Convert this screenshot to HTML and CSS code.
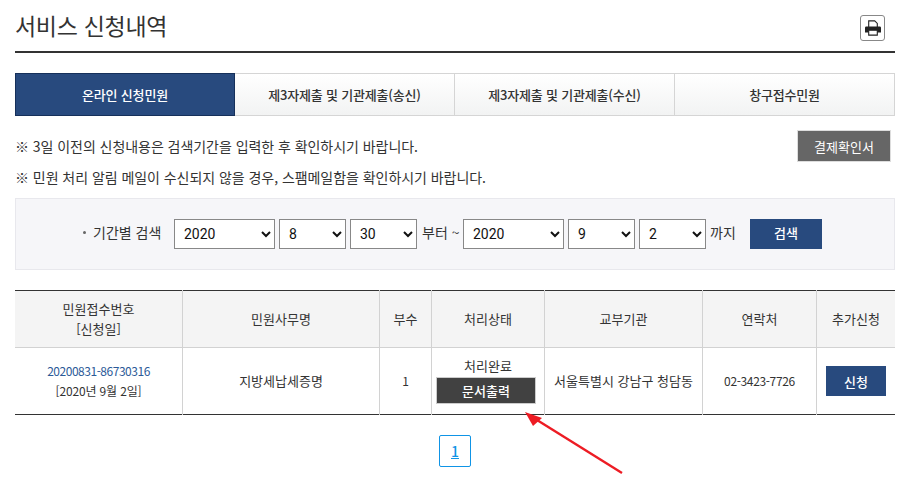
FILE: index.html
```html
<!DOCTYPE html>
<html lang="ko">
<head>
<meta charset="utf-8">
<title>서비스 신청내역</title>
<link rel="stylesheet" href="styles.css">
</head>
<body>
<main class="page">
  <header class="head">
    <h1 class="title">서비스 신청내역</h1>
    <button class="print" type="button" aria-label="인쇄">
      <svg viewBox="0 0 16 16" width="16" height="16">
        <path fill="#fff" stroke="#222" stroke-width="1.100" d="M3.700 7.500V.9h6l2.600 2.500v4.100z"/>
        <path fill="#222" d="M1.300 6.500h13.400a1.300 1.300 0 0 1 1.300 1.300V12.500H0V7.800a1.300 1.300 0 0 1 1.300-1.300z"/>
        <path fill="#fff" stroke="#222" stroke-width="1.100" d="M3.700 10.200h8.600v4.900H3.700z"/>
      </svg>
    </button>
  </header>

  <nav class="tabs">
    <a class="tab active">온라인 신청민원</a>
    <a class="tab">제3자제출 및 기관제출(송신)</a>
    <a class="tab">제3자제출 및 기관제출(수신)</a>
    <a class="tab">창구접수민원</a>
  </nav>

  <section class="notes">
    <div class="note-list">
      <p>※ 3일 이전의 신청내용은 검색기간을 입력한 후 확인하시기 바랍니다.</p>
      <p>※ 민원 처리 알림 메일이 수신되지 않을 경우, 스팸메일함을 확인하시기 바랍니다.</p>
    </div>
    <button class="confirm" type="button">결제확인서</button>
  </section>

  <form class="search">
    <span class="search-label"><i class="dot"></i>기간별 검색</span>
    <select class="sel year"><option>2020</option></select>
    <select class="sel"><option>8</option></select>
    <select class="sel"><option>30</option></select>
    <span class="word from">부터 ~</span>
    <select class="sel year"><option>2020</option></select>
    <select class="sel"><option>9</option></select>
    <select class="sel"><option>2</option></select>
    <span class="word to">까지</span>
    <button class="go" type="button">검색</button>
  </form>

  <table class="list">
    <colgroup>
      <col class="c1"><col class="c2"><col class="c3"><col class="c4"><col class="c5"><col class="c6"><col class="c7">
    </colgroup>
    <thead>
      <tr>
        <th>민원접수번호<br>[신청일]</th>
        <th>민원사무명</th>
        <th>부수</th>
        <th>처리상태</th>
        <th>교부기관</th>
        <th>연락처</th>
        <th>추가신청</th>
      </tr>
    </thead>
    <tbody>
      <tr>
        <td class="small"><a class="num">20200831-86730316</a><br><span class="date">[2020년 9월 2일]</span></td>
        <td>지방세납세증명</td>
        <td class="small">1</td>
        <td class="state">처리완료<button class="doc" type="button">문서출력</button></td>
        <td>서울특별시 강남구 청담동</td>
        <td class="small phone">02-3423-7726</td>
        <td><button class="apply" type="button">신청</button></td>
      </tr>
    </tbody>
  </table>

  <div class="pager"><a class="pg">1</a></div>

  <svg class="arrow" viewBox="0 0 110 75" width="110" height="75" aria-hidden="true">
    <line x1="102" y1="68" x2="17" y2="15" stroke="#ed1c24" stroke-width="2.400"/>
    <polygon points="5,7 22,13 13,21" fill="#ed1c24"/>
  </svg>
</main>
</body>
</html>
```
FILE: styles.css
```css
* { box-sizing: border-box; }
html, body { margin: 0; padding: 0; background: #fff; }
body {
  font-family: "Noto Sans CJK KR", "Noto Sans", sans-serif;
  color: #333;
  font-size: 13px;
  overflow: hidden;
  height: 504px;
}
.page { position: relative; width: 880px; margin-left: 15px; }
.head {
  height: 53px;
  border-bottom: 2px solid #333;
  display: flex;
  justify-content: space-between;
  align-items: flex-start;
}
.title { margin: 8px 0 0; font-size: 23px; line-height: 34px; font-weight: 400; color: #333; letter-spacing: -0.3px; }
.print {
  width: 25px; height: 26px; margin: 15px 10px 0 0; padding: 0;
  background: #fff; border: 1px solid #888; border-radius: 3px;
  display: flex; align-items: center; justify-content: center;
}
.tabs { display: flex; margin-top: 20px; height: 43px; }
.tab {
  width: 220px;
  display: flex; align-items: center; justify-content: center;
  border: 1px solid #d5d5d5; border-left: 0;
  background: linear-gradient(#fff, #f2f3f3);
  font-size: 13px; font-weight: 500; color: #333;
  letter-spacing: -0.18px;
}
.tab:last-child { border-right: 1px solid #d5d5d5; }
.tab.active { background: #284a7e; color: #fff; border: 1px solid #16305a; }
.notes { display: flex; justify-content: space-between; height: 82px; padding: 14px 4px 0 0; }
.note-list { padding-top: 5px; }
.note-list p { margin: 0 0 9px; font-size: 14px; line-height: 22px; color: #333; letter-spacing: -0.05px; }
.confirm {
  width: 94px; height: 32px; padding: 0;
  background: #666; color: #fff; border: 1px solid #ddd;
  font: 400 13px "Noto Sans CJK KR", sans-serif;
}
.search {
  height: 72px;
  background: #f6f6f9;
  border: 1px solid #e8e8ed;
  display: flex; align-items: flex-start;
  padding: 20px 0 0 66px;
}
.search-label { display: flex; align-items: center; height: 26px; font-size: 14px; width: 92px; white-space: nowrap; }
.dot { width: 3px; height: 3px; background: #666; border-radius: 50%; margin: 0 7px 0 1px; }
.sel {
  width: 67px; height: 30px; margin-right: 4px;
  background: #fff; border: 1px solid #888; border-radius: 0;
  font: 400 14px Roboto, "Noto Sans", sans-serif; color: #111;
  padding-left: 5px;
}
.sel.year { width: 101px; }
.word { height: 26px; display: flex; align-items: center; font-size: 14px; white-space: nowrap; }
.from { width: 42px; }
.to { width: 40px; }
.word.from { margin-left: 1px; margin-right: -1px; }
.go {
  width: 72px; height: 30px; padding: 0 0 3px; border: 0;
  background: #284a7e; color: #fff;
  font: 500 13px "Noto Sans CJK KR", sans-serif;
}
.list {
  width: 880px; margin-top: 20px;
  border-collapse: collapse; table-layout: fixed;
  border-top: 1px solid #333; border-bottom: 1px solid #333;
}
.c1 { width: 167.500px; } .c2 { width: 197px; } .c3 { width: 52px; } .c4 { width: 113px; }
.c5 { width: 158px; } .c6 { width: 114px; } .c7 { width: 78.500px; }
.list th, .list td { border-left: 1px solid #d2d2d2; border-right: 1px solid #d2d2d2; text-align: center; padding: 0; }
.list th:first-child, .list td:first-child { border-left: 0; }
.list th:last-child, .list td:last-child { border-right: 0; }
.list th {
  height: 57px; background: #f4f4f4; font-weight: 400; font-size: 13px; line-height: 20px; color: #333;
  border-bottom: 1px solid #d2d2d2;
}
.list td { height: 67px; font-size: 13px; line-height: 20px; color: #333; }
.list td.small { font-size: 12px; }
.num { color: #2c5a98; letter-spacing: -0.47px; }
.date { letter-spacing: -0.15px; }
.list td.phone { letter-spacing: -0.35px; }
.list td.state { line-height: 19px; padding: 0 0 3px; }
.doc {
  display: block; width: 100px; height: 27px; margin: 2px 0 0 4px; padding: 0;
  background: #414141; color: #fff; border: 1px solid #ccc;
  font: 500 13px "Noto Sans CJK KR", sans-serif;
}
.apply {
  width: 60px; height: 30px; padding: 0; border: 0;
  background: #284a7e; color: #fff;
  font: 500 13px "Noto Sans CJK KR", sans-serif;
}
.pager { display: flex; justify-content: center; margin-top: 20px; }
.pg {
  width: 32px; height: 32px;
  display: flex; align-items: center; justify-content: center;
  border: 1px solid #0f94e6; border-radius: 2px;
  color: #0f94e6; font-size: 14px; font-weight: 500; text-decoration: underline;
}
.arrow { position: absolute; left: 505px; top: 405px; }
```
